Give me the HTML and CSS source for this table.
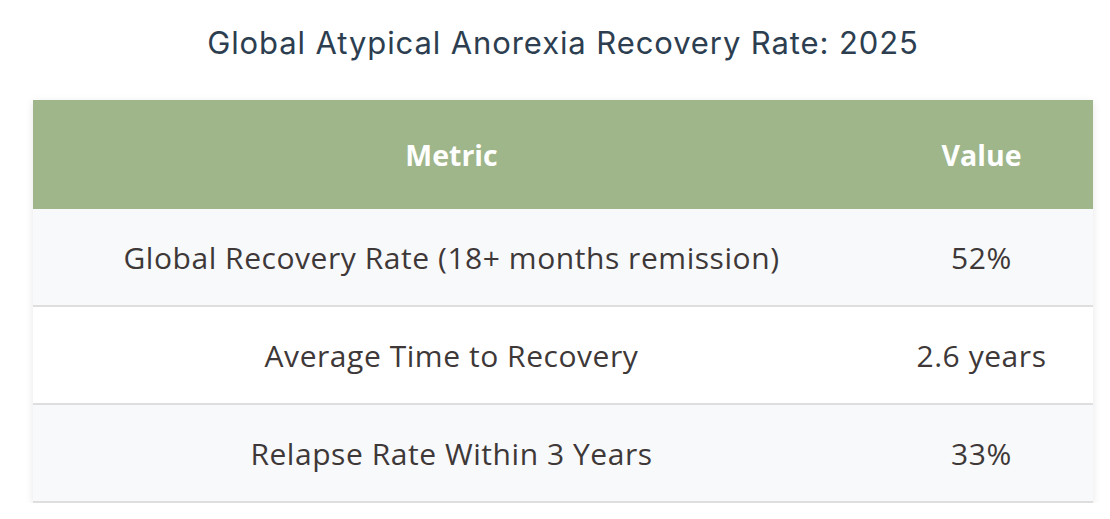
FILE: index.html
```html
<!DOCTYPE html>
<html>
<head>
<meta charset="utf-8">
<link rel="stylesheet" href="styles.css">
</head>
<body>
<div class="wrap">
  <h2 class="title">Global Atypical Anorexia Recovery Rate: 2025</h2>
  <table class="data">
    <thead>
      <tr><th class="c1">Metric</th><th class="c2">Value</th></tr>
    </thead>
    <tbody>
      <tr><td>Global Recovery Rate (18+ months remission)</td><td>52%</td></tr>
      <tr><td>Average Time to Recovery</td><td>2.6 years</td></tr>
      <tr><td>Relapse Rate Within 3 Years</td><td>33%</td></tr>
    </tbody>
  </table>
</div>
</body>
</html>
```
FILE: styles.css
```css
html, body { margin: 0; padding: 0; background: #fff; }
.wrap { padding: 20px 17px 0 33px; }
.title {
  margin: 0 0 34px 0;
  text-align: center;
  font-family: "Inter", "Liberation Sans", sans-serif;
  font-weight: 400;
  font-size: 31px;
  letter-spacing: 0.9px;
  color: #2c3e50;
  line-height: 46px;
}
.data {
  width: 1060px;
  border-collapse: collapse;
  box-shadow: 0 2px 8px rgba(0,0,0,0.10);
  font-family: "Open Sans", "Lato", sans-serif;
}
.data th {
  background: #9eb68a;
  color: #fff;
  font-weight: 700;
  font-size: 28.5px;
  height: 109px;
  padding: 0;
  text-align: center;
}
.data th.c1 { width: 837px; }
.data td {
  height: 96px;
  padding: 0;
  text-align: center;
  font-size: 30px;
  letter-spacing: 0.55px;
  color: #3e3838;
  border-bottom: 2px solid #dedede;
}
.data tbody tr:nth-child(odd) td { background: #f8f9fa; }
.data tbody tr:nth-child(even) td { background: #fff; }
```
